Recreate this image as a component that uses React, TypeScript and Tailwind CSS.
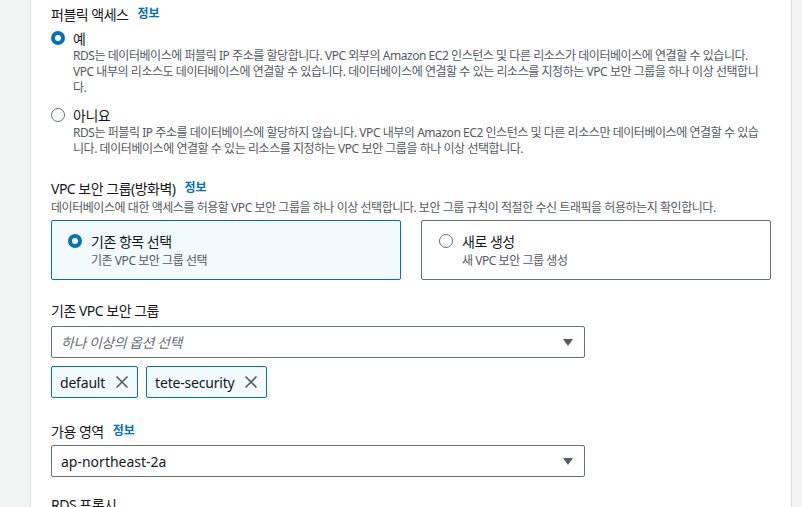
import React from 'react';

const Radio: React.FC<{ checked?: boolean }> = ({ checked }) =>
  checked ? (
    <span className="w-[14px] h-[14px] rounded-full bg-[#0073bb] flex items-center justify-center shrink-0">
      <span className="w-[6px] h-[6px] rounded-full bg-white" />
    </span>
  ) : (
    <span className="w-[14px] h-[14px] rounded-full border-[1.5px] border-[#687078] bg-white shrink-0" />
  );

const Info: React.FC = () => (
  <span className="ml-[9px] text-[12px] font-bold tracking-normal text-[#0073bb]">정보</span>
);

const Caret: React.FC = () => (
  <svg width="10" height="7" viewBox="0 0 10 7" className="shrink-0">
    <path d="M0 0 L10 0 L5 7 Z" fill="#545b64" />
  </svg>
);

const Token: React.FC<{ label: string }> = ({ label }) => (
  <div className="h-[32px] flex items-center border border-[#0073bb] bg-[#f1faff] rounded-[2px] pl-[8px] pr-[8px]">
    <span className="text-[14px] text-[#16191f] tracking-[-0.2px]">{label}</span>
    <svg width="14" height="14" viewBox="0 0 14 14" className="ml-[10px]">
      <path d="M1.5 1.5 L12.5 12.5 M12.5 1.5 L1.5 12.5" stroke="#545b64" strokeWidth="1.6" />
    </svg>
  </div>
);

const desc = 'pl-[22px] text-[12px] leading-[16px] text-[#545b64] tracking-[-0.45px] whitespace-nowrap';

const App: React.FC = () => {
  return (
    <div
      className="flex w-[802px] h-[507px] overflow-hidden bg-white text-[#16191f]"
      style={{ fontFamily: '"Noto Sans", "Noto Sans CJK KR", sans-serif' }}
    >
      <div className="w-[31px] shrink-0 bg-[#f2f3f3] border-r border-[#d5dbdb]" />
      <div className="flex-1 pl-[20px] pr-[20px] pt-[4px]">
        <div className="flex items-center h-[20px] text-[14px] tracking-[-0.5px]">
          퍼블릭 액세스
          <Info />
        </div>

        <div className="mt-[4px]">
          <div className="flex items-center h-[20px]">
            <Radio checked />
            <span className="ml-[8px] text-[14px]">예</span>
          </div>
          <p className={desc}>
            RDS는 데이터베이스에 퍼블릭 IP 주소를 할당합니다. VPC 외부의 Amazon EC2 인스턴스 및 다른 리소스가 데이터베이스에 연결할 수 있습니다.
            <br />
            VPC 내부의 리소스도 데이터베이스에 연결할 수 있습니다. 데이터베이스에 연결할 수 있는 리소스를 지정하는 VPC 보안 그룹을 하나 이상 선택합니
            <br />
            다.
          </p>
        </div>

        <div className="mt-[9px]">
          <div className="flex items-center h-[20px]">
            <Radio />
            <span className="ml-[8px] text-[14px] tracking-[-0.5px]">아니요</span>
          </div>
          <p className={desc}>
            RDS는 퍼블릭 IP 주소를 데이터베이스에 할당하지 않습니다. VPC 내부의 Amazon EC2 인스턴스 및 다른 리소스만 데이터베이스에 연결할 수 있습
            <br />
            니다. 데이터베이스에 연결할 수 있는 리소스를 지정하는 VPC 보안 그룹을 하나 이상 선택합니다.
          </p>
        </div>

        <div className="mt-[21px] flex items-center h-[20px] text-[14px] tracking-[-0.5px]">
          VPC 보안 그룹(방화벽)
          <Info />
        </div>
        <p className="mt-[2px] text-[12px] leading-[16px] text-[#545b64] tracking-[-0.45px] whitespace-nowrap">
          데이터베이스에 대한 액세스를 허용할 VPC 보안 그룹을 하나 이상 선택합니다. 보안 그룹 규칙이 적절한 수신 트래픽을 허용하는지 확인합니다.
        </p>

        <div className="mt-[4px] grid grid-cols-2 gap-[20px]">
          <div className="h-[60px] border border-[#0073bb] bg-[#f1faff] rounded-[2px] pl-[16px] pt-[10px]">
            <div className="flex items-center h-[20px]">
              <Radio checked />
              <span className="ml-[9px] text-[14px] tracking-[-0.5px]">기존 항목 선택</span>
            </div>
            <div className="mt-[2px] pl-[23px] text-[12px] leading-[16px] text-[#545b64] tracking-[-0.45px]">기존 VPC 보안 그룹 선택</div>
          </div>
          <div className="h-[60px] border border-[#687078] bg-white rounded-[2px] pl-[17px] pt-[10px]">
            <div className="flex items-center h-[20px]">
              <Radio />
              <span className="ml-[9px] text-[14px] tracking-[-0.5px]">새로 생성</span>
            </div>
            <div className="mt-[2px] pl-[23px] text-[12px] leading-[16px] text-[#545b64] tracking-[-0.45px]">새 VPC 보안 그룹 생성</div>
          </div>
        </div>

        <div className="mt-[20px] h-[20px] flex items-center text-[14px] tracking-[-0.5px]">기존 VPC 보안 그룹</div>
        <div className="mt-[6px] w-[534px] h-[32px] border border-[#687078] rounded-[2px] flex items-center justify-between pl-[9px] pr-[11px]">
          <span className="text-[14px] italic text-[#687078] tracking-[-0.5px]">하나 이상의 옵션 선택</span>
          <Caret />
        </div>
        <div className="mt-[8px] flex gap-[8px]">
          <Token label="default" />
          <Token label="tete-security" />
        </div>

        <div className="mt-[23px] flex items-center h-[20px] text-[14px] tracking-[-0.5px]">
          가용 영역
          <Info />
        </div>
        <div className="mt-[4px] w-[534px] h-[32px] border border-[#687078] rounded-[2px] flex items-center justify-between pl-[9px] pr-[11px]">
          <span className="text-[14px]">ap-northeast-2a</span>
          <Caret />
        </div>

        <div className="mt-[17px] h-[20px] flex items-center text-[14px] tracking-[-0.5px]">RDS 프록시</div>
      </div>
      <div className="w-[11px] shrink-0 bg-[#f2f3f3] border-l border-[#d5dbdb]" />
    </div>
  );
};

export default App;
